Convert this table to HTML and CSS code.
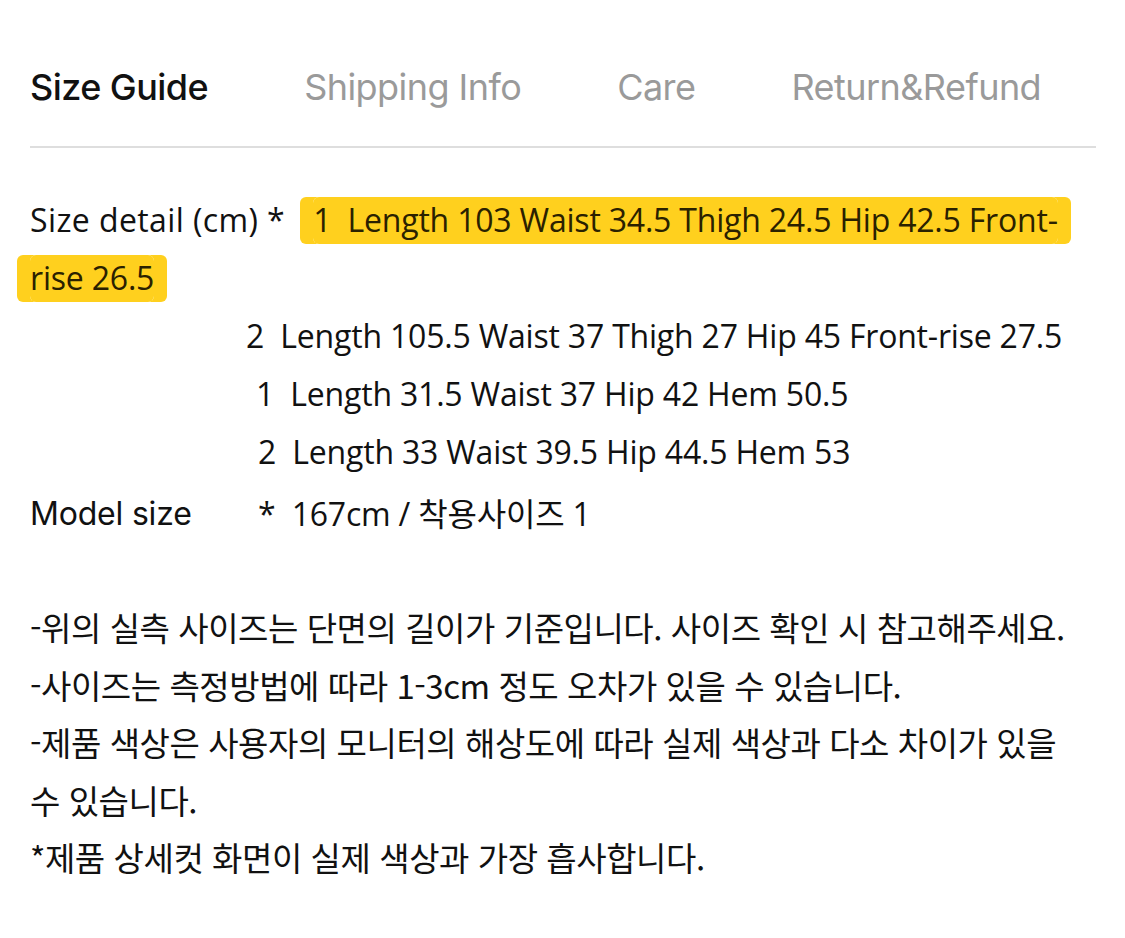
FILE: index.html
```html
<!DOCTYPE html>
<html lang="ko">
<head>
<meta charset="utf-8">
<title>Size Guide</title>
<link rel="stylesheet" href="styles.css">
</head>
<body>
<div class="page">
  <nav class="tabs">
    <span class="tab active">Size Guide</span>
    <span class="tab">Shipping Info</span>
    <span class="tab">Care</span>
    <span class="tab">Return&amp;Refund</span>
  </nav>
  <div class="divider"></div>
  <section class="sizes">
    <p class="detail"><span class="detail-label">Size detail (cm) *</span> <mark class="hl">1&nbsp; Length 103 Waist 34.5 Thigh 24.5 Hip 42.5 Front-rise 26.5</mark></p>
    <p class="row r2">2&nbsp; Length 105.5 Waist 37 Thigh 27 Hip 45 Front-rise 27.5</p>
    <p class="row r3">1&nbsp; Length 31.5 Waist 37 Hip 42 Hem 50.5</p>
    <p class="row r4">2&nbsp; Length 33 Waist 39.5 Hip 44.5 Hem 53</p>
    <p class="model"><span class="label">Model size</span><span class="val">*&nbsp; 167cm / 착용사이즈 1</span></p>
  </section>
  <section class="notes">
    <p>-위의 실측 사이즈는 단면의 길이가 기준입니다. 사이즈 확인 시 참고해주세요.</p>
    <p>-사이즈는 측정방법에 따라 1-3cm 정도 오차가 있을 수 있습니다.</p>
    <p>-제품 색상은 사용자의 모니터의 해상도에 따라 실제 색상과 다소 차이가 있을 수 있습니다.</p>
    <p>*제품 상세컷 화면이 실제 색상과 가장 흡사합니다.</p>
  </section>
</div>
</body>
</html>
```

FILE: styles.css
```css
html, body {
  margin: 0;
  padding: 0;
  background: #fff;
}
.page {
  padding: 0 30px 0 30px;
  width: 1066px;
  color: #111;
}
p { margin: 0; }
.tabs {
  display: flex;
  gap: 96px;
  padding-top: 61px;
  font-family: Inter, "Noto Sans", sans-serif;
  font-size: 36px;
  line-height: 52px;
  letter-spacing: -0.55px;
}
.tab { color: #9a9a9a; }
.tab.active { color: #111; font-weight: 500; }
.divider {
  height: 2px;
  background: #dedede;
  margin-top: 33px;
}
.sizes {
  padding-top: 43px;
  font-family: "Open Sans", "Noto Sans CJK KR", sans-serif;
  font-size: 32px;
  line-height: 58px;
  letter-spacing: -0.2px;
}
.detail { width: 1054px; }
.detail-label {
  letter-spacing: 0.4px;
  margin-right: 20px;
}
.hl {
  background: #ffd01e;
  color: #2a2100;
  padding: 1px 0 3px 0;
  border-radius: 6px;
  box-shadow: -13px 0 0 #ffd01e, 13px 0 0 #ffd01e;
  -webkit-box-decoration-break: clone;
  box-decoration-break: clone;
}
.row { padding-left: 216px; }
.r3 { padding-left: 226px; }
.r4 { padding-left: 228px; }
.model {
  display: flex;
  margin-top: 4px;
}
.label {
  width: 228px;
  font-family: Inter, sans-serif;
  font-size: 32px;
  letter-spacing: -0.2px;
}
.notes {
  width: 1045px;
  padding-top: 56px;
  font-family: "Noto Sans CJK KR", sans-serif;
  font-size: 33px;
  line-height: 57.5px;
  letter-spacing: -0.45px;
  word-break: keep-all;
}
```
